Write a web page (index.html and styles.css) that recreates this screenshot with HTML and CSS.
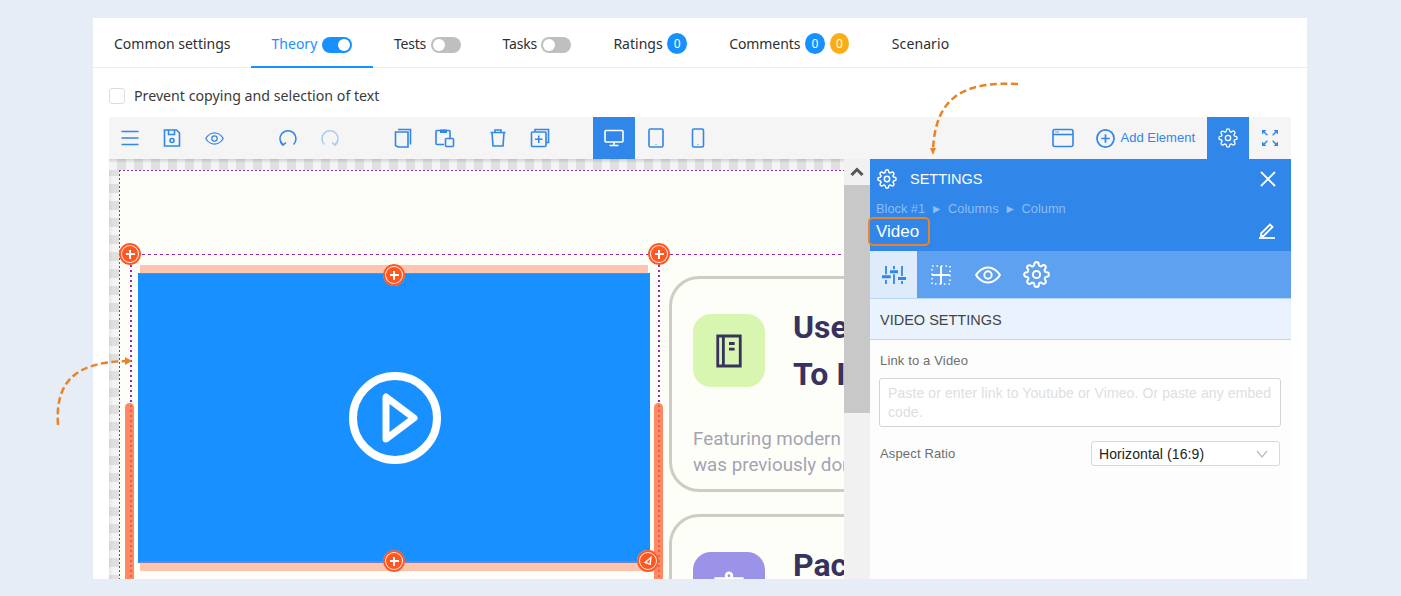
FILE: index.html
```html
<!DOCTYPE html>
<html lang="en">
<head>
  <meta charset="UTF-8">
  <meta name="viewport" content="width=device-width, initial-scale=1.0">
  <title>Lesson editor</title>
  <link rel="stylesheet" href="styles.css">
</head>
<body>
  <svg class="defs" width="0" height="0">
    <symbol id="gear" viewBox="0 0 24 24">
      <circle cx="12" cy="12" r="3.2"/>
      <path d="M19.4 15a1.65 1.65 0 0 0 .33 1.82l.06.06a2 2 0 0 1 0 2.83 2 2 0 0 1-2.83 0l-.06-.06a1.65 1.65 0 0 0-1.82-.33 1.65 1.65 0 0 0-1 1.51V21a2 2 0 0 1-2 2 2 2 0 0 1-2-2v-.09A1.65 1.65 0 0 0 9 19.4a1.65 1.65 0 0 0-1.82.33l-.06.06a2 2 0 0 1-2.83 0 2 2 0 0 1 0-2.83l.06-.06a1.65 1.65 0 0 0 .33-1.82 1.65 1.65 0 0 0-1.51-1H3a2 2 0 0 1-2-2 2 2 0 0 1 2-2h.09A1.65 1.65 0 0 0 4.6 9a1.65 1.65 0 0 0-.33-1.82l-.06-.06a2 2 0 0 1 0-2.83 2 2 0 0 1 2.83 0l.06.06a1.65 1.65 0 0 0 1.82.33H9a1.65 1.65 0 0 0 1-1.51V3a2 2 0 0 1 2-2 2 2 0 0 1 2 2v.09a1.65 1.65 0 0 0 1 1.51 1.65 1.65 0 0 0 1.82-.33l.06-.06a2 2 0 0 1 2.83 0 2 2 0 0 1 0 2.83l-.06.06a1.65 1.65 0 0 0-.33 1.82V9a1.65 1.65 0 0 0 1.51 1H21a2 2 0 0 1 2 2 2 2 0 0 1-2 2h-.09a1.65 1.65 0 0 0-1.51 1z"/>
    </symbol>
    <symbol id="eye" viewBox="0 0 24 24">
      <path d="M1 12s4-7 11-7 11 7 11 7-4 7-11 7-11-7-11-7z"/>
      <circle cx="12" cy="12" r="3.4"/>
    </symbol>
  </svg>

  <div class="app">
    <!-- Tabs -->
    <div class="tabs">
      <div class="tab first">Common settings</div>
      <div class="tab active">Theory <span class="toggle on"></span></div>
      <div class="tab tight">Tests <span class="toggle"></span></div>
      <div class="tab tight">Tasks <span class="toggle"></span></div>
      <div class="tab">Ratings <span class="badge">0</span></div>
      <div class="tab comments">Comments <span class="badge">0</span><span class="badge orange">0</span></div>
      <div class="tab last">Scenario</div>
    </div>

    <label class="copy-row"><span class="checkbox"></span>Prevent copying and selection of text</label>

    <!-- Toolbar -->
    <div class="toolbar">
      <div class="tool"><svg viewBox="0 0 20 20" width="20" height="20"><path d="M1.500 3.500h17M1.500 10h17M1.500 16.500h17"/></svg></div>
      <div class="tool"><svg viewBox="0 0 20 20" width="20" height="20"><path d="M2.500 2h12l3 3v13h-15z"/><path d="M6.500 2v4.500h6V2"/><circle cx="10" cy="12.500" r="2"/></svg></div>
      <div class="tool"><svg width="19" height="19"><use href="#eye"/></svg></div>

      <div class="tool gap-l"><svg viewBox="0 0 20 20" width="20" height="20"><path d="M5 17A8 8 0 1 1 15.500 16.500"/><path d="M2.500 13.500l2.500 3.500 3-2.500"/></svg></div>
      <div class="tool faded"><svg viewBox="0 0 20 20" width="20" height="20"><path d="M15 17A8 8 0 1 0 4.500 16.500"/><path d="M17.500 13.500l-2.500 3.500-3-2.500"/></svg></div>

      <div class="tool gap-m"><svg viewBox="0 0 20 20" width="20" height="20"><path d="M5 1.500h12.500v15"/><path d="M15 4H2.500v13.500l2.500 1.500h10z"/></svg></div>
      <div class="tool"><svg viewBox="0 0 20 20" width="20" height="20"><path d="M9 16.500H2a1 1 0 0 1-1-1V3.500a1 1 0 0 1 1-1h12a1 1 0 0 1 1 1V10"/><path class="filled" d="M5 1.500h7V5H5z"/><rect x="10.500" y="10.500" width="8" height="8" rx="1"/></svg></div>

      <div class="tool gap-s"><svg viewBox="0 0 20 20" width="20" height="20"><path d="M2.500 4.500h15M7 4.500V2h6v2.500M4 4.500l1 13.500h10l1-13.500"/></svg></div>
      <div class="tool"><svg viewBox="0 0 20 20" width="20" height="20"><path d="M5 3.500V1.500h13.500v13H16"/><rect x="1.500" y="4" width="14.500" height="14.500" rx="1"/><path d="M8.700 7.500v7.500M5 11.200h7.500"/></svg></div>

      <div class="tool gap-l current"><svg viewBox="0 0 20 20" width="20" height="20"><rect x="1" y="2.500" width="18" height="11.500" rx="1"/><path d="M10 14v3M5.500 17.500h9"/></svg></div>
      <div class="tool"><svg viewBox="0 0 20 20" width="20" height="20"><rect x="3" y="1" width="14" height="18" rx="1.500"/><path d="M10 16v.6"/></svg></div>
      <div class="tool"><svg viewBox="0 0 20 20" width="20" height="20"><rect x="4.500" y="1" width="11" height="18" rx="1.500"/><path d="M10 16v.6"/></svg></div>

      <div class="tool push"><svg viewBox="0 0 22 20" width="22" height="20"><rect x="1" y="1.500" width="20" height="17" rx="2"/><path d="M1 6.500h20"/><path d="M3.500 4h3" stroke-dasharray="1 1"/></svg></div>
      <div class="add-element">
        <svg viewBox="0 0 20 20" width="19" height="19"><circle cx="10" cy="10" r="9"/><path d="M10 5.500v9M5.500 10h9"/></svg>
        <span>Add Element</span>
      </div>
      <div class="tool current"><svg width="20" height="20" class="gear"><use href="#gear"/></svg></div>
      <div class="tool"><svg viewBox="0 0 18 18" width="16" height="16"><path d="M1.500 1.500l4.500 4.500M16.500 1.500L12 6M1.500 16.500L6 12M16.500 16.500L12 12"/><path class="filled" d="M0 0h5L0 5zM18 0h-5l5 5zM0 18h5l-5-5zM18 18h-5l5-5z"/></svg></div>
    </div>

    <div class="editor">
      <!-- Page canvas -->
      <div class="canvas">
        <div class="page">
          <div class="row">
            <div class="column">
              <div class="spacing-bar over"></div>
              <div class="video">
                <svg viewBox="0 0 92 92" width="92" height="92"><circle cx="46" cy="46" r="42"/><path d="M37 25v42l28-21z"/></svg>
              </div>
              <div class="spacing-bar under"></div>
              <span class="resize-bar left"></span>
              <span class="resize-bar right"></span>
              <span class="handle corner-tl"></span>
              <span class="handle corner-tr"></span>
              <span class="handle top-mid"></span>
              <span class="handle bottom-mid"></span>
              <span class="handle bottom-end">
                <svg viewBox="0 0 14 14" width="14" height="14"><path d="M11 2L3 9l7 2.500z"/></svg>
              </span>
            </div>

            <div class="cards">
              <div class="card">
                <div class="card-head">
                  <div class="tile green">
                    <svg viewBox="0 0 32 36" width="30" height="34"><path d="M4 2h24v32H4z"/><path d="M10 2v32M16 10h6M16 16h6"/></svg>
                  </div>
                  <h2>Use Modern Tools<br>To Improve Lessons</h2>
                </div>
                <p>Featuring modern design and layouts<br>was previously done by hand in code</p>
              </div>
              <div class="card">
                <div class="card-head">
                  <div class="tile purple">
                    <svg viewBox="0 0 36 36" width="34" height="34"><path d="M4 7h28v22H4z"/><circle cx="18" cy="4" r="3"/></svg>
                  </div>
                  <h2>Packed With Blocks</h2>
                </div>
              </div>
            </div>
          </div>
        </div>
      </div>

      <div class="scrollbar">
        <div class="scroll-up"><svg viewBox="0 0 14 10" width="14" height="10"><path d="M1.500 8L7 2.500 12.500 8"/></svg></div>
        <div class="scroll-thumb"></div>
      </div>

      <!-- Settings panel -->
      <div class="panel">
        <div class="panel-head">
          <div class="panel-title">
            <svg width="20" height="20"><use href="#gear"/></svg>
            <span>SETTINGS</span>
            <svg class="close" viewBox="0 0 16 16" width="16" height="16"><path d="M1 1l14 14M15 1L1 15"/></svg>
          </div>
          <div class="crumbs">Block #1 <i>►</i> Columns <i>►</i> Column</div>
          <div class="name-row">
            <span class="name">Video</span>
            <svg viewBox="0 0 18 18" width="18" height="18"><path d="M3 12.500L12 3.500l2.500 2.500-9 9H3z"/><path d="M1 17h16"/></svg>
          </div>
        </div>

        <div class="panel-tabs">
          <div class="panel-tab active"><svg viewBox="0 0 24 24" width="24" height="24"><path d="M4 3v8.300M4 17v4M12 3v3.300M12 11.300V21M20 3v10M20 18v3"/><path class="thick" d="M0 13.700h8.700M8 8.700h8M16 15.500h8"/></svg></div>
          <div class="panel-tab"><svg viewBox="0 0 20 20" width="20" height="20"><path d="M10 1v18M1 10h18"/><path class="dots" d="M1 1h18v18H1z"/></svg></div>
          <div class="panel-tab"><svg width="26" height="26"><use href="#eye"/></svg></div>
          <div class="panel-tab last"><svg width="27" height="27"><use href="#gear"/></svg></div>
        </div>

        <div class="section-title">VIDEO SETTINGS</div>

        <div class="panel-body">
          <div class="field-label">Link to a Video</div>
          <div class="textarea">Paste or enter link to Youtube or Vimeo. Or paste any embed code.</div>
          <div class="ratio-row">
            <span class="field-label">Aspect Ratio</span>
            <div class="select">
              Horizontal (16:9)
              <svg viewBox="0 0 12 8" width="12" height="8"><path d="M1 1l5 6 5-6"/></svg>
            </div>
          </div>
        </div>
      </div>
    </div>
  </div>

  <!-- Callout arrows -->
  <svg class="arrow arrow-top" viewBox="0 0 90 76" width="90" height="76"><path d="M87 3C40 1 4 10 2 70"/><path class="tip" d="M-1 67h6l-3 7z"/></svg>
  <svg class="arrow arrow-left" viewBox="0 0 80 70" width="80" height="70"><path d="M3 68C0 25 20 5 72 4"/><path class="tip" d="M70 0l7 4-7 4z"/></svg>
</body>
</html>
```

FILE: styles.css
```css
* {
  box-sizing: border-box;
}

html, body {
  height: 100%;
}

body {
  margin: 0;
  overflow: hidden;
  position: relative;
  padding: 18px 94px 17px 93px;
  background-color: #e7edf6;
  font-family: "Noto Sans", Arial, sans-serif;
  color: #333;
}

.defs {
  position: absolute;
}

svg {
  display: block;
  fill: none;
  stroke: currentColor;
  stroke-width: 1.8;
  overflow: visible;
}

svg .filled {
  fill: currentColor;
  stroke: none;
}

.app {
  height: 100%;
  padding: 0 16px;
  background: white;
  overflow: hidden;
  display: flex;
  flex-direction: column;
}

/* Tabs */
.tabs {
  display: flex;
  height: 50px;
  margin: 0 -16px;
  border-bottom: 1px solid #eee;
  font-size: 14px;
}

.tab {
  display: flex;
  align-items: center;
  padding: 2px 21px 0;
  white-space: pre;
  color: #2f2f2f;
}

.tab.first {
  margin-right: -1px;
}

.tab.tight {
  letter-spacing: -0.2px;
}

.tab.comments {
  letter-spacing: -0.1px;
}

.tab.last {
  padding-left: 22px;
  letter-spacing: 0.1px;
}

.tab.active {
  color: #1890ff;
  border-bottom: 2px solid #1890ff;
  height: 50px;
  padding-top: 3px;
}

.toggle {
  position: relative;
  width: 30px;
  height: 16px;
  margin: 2px 0 0 1px;
  border-radius: 8px;
  background: #bfbfbf;
}

.toggle::after {
  content: "";
  position: absolute;
  top: 2px;
  left: 2px;
  width: 12px;
  height: 12px;
  border-radius: 50%;
  background: white;
}

.toggle.on {
  background: #1890ff;
}

.toggle.on::after {
  left: 16px;
}

.badge {
  width: 20px;
  height: 21px;
  margin-left: 1px;
  border-radius: 50%;
  background: #1890ff;
  color: white;
  font-size: 12px;
  line-height: 22px;
  text-align: center;
}

.badge.orange {
  width: 19px;
  margin-left: 5px;
  background: #faad14;
}

.copy-row {
  display: flex;
  align-items: center;
  gap: 9px;
  height: 49px;
  padding-top: 6px;
  font-size: 14.2px;
  color: #3a3a3a;
}

.checkbox {
  width: 16px;
  height: 16px;
  border: 1px solid #ddd;
  border-radius: 3px;
}

/* Toolbar */
.toolbar {
  display: flex;
  flex: none;
  height: 42px;
  background: #f5f5f5;
  color: #3086e9;
}

.tool {
  display: flex;
  align-items: center;
  justify-content: center;
  width: 42px;
}

.tool svg {
  stroke-width: 1.6;
}

.tool.faded {
  color: #a9cdf5;
}

.tool.current {
  background: #3086e9;
  color: white;
}

.gap-l {
  margin-left: 32px;
}

.gap-m {
  margin-left: 31px;
}

.gap-s {
  margin-left: 11px;
}

.push {
  margin-left: auto;
}

.add-element {
  display: flex;
  align-items: center;
  gap: 6px;
  padding: 0 12px 0 12px;
  font-family: "Liberation Sans", Arial, sans-serif;
  font-size: 13px;
}

.add-element span {
  margin-top: -2px;
}

/* Editor */
.editor {
  display: flex;
  flex: 1;
  min-height: 0;
}

.canvas {
  width: 735px;
  padding: 11px 0 0 10px;
  overflow: hidden;
  background-color: #eee;
  background-image:
    linear-gradient(rgba(0, 0, 0, 0.14), rgba(0, 0, 0, 0) 4px),
    repeating-linear-gradient(90deg, #f4f4f4 0 8px, #e0e0e0 8px 17px),
    linear-gradient(90deg, rgba(0, 0, 0, 0.06), rgba(0, 0, 0, 0) 4px),
    repeating-linear-gradient(#f4f4f4 0 8px, #e0e0e0 8px 17px);
  background-size: 100% 11px, 100% 11px, 10px 100%, 10px 100%;
  background-repeat: no-repeat;
}

.page {
  height: 100%;
  padding: 84px 0 0 11px;
  background:
    repeating-linear-gradient(90deg, #9c27b0 0 2px, transparent 2px 4px) top / 100% 1px no-repeat,
    repeating-linear-gradient(#9c27b0 0 2px, transparent 2px 4px) left / 1px 100% no-repeat,
    #fefef8;
}

.row {
  display: flex;
  padding-top: 1px;
  background: repeating-linear-gradient(90deg, #9c27b0 0 3px, transparent 3px 6px) top / 100% 1px no-repeat;
  font-family: Roboto, Arial, sans-serif;
}

.column {
  position: relative;
  flex: none;
  width: 530px;
  padding: 10px 10px 0 8px;
  background:
    repeating-linear-gradient(#9c27b0 0 2px, transparent 2px 5px) left / 2px 100% no-repeat,
    repeating-linear-gradient(#9c27b0 0 2px, transparent 2px 5px) right / 2px 100% no-repeat;
}

.spacing-bar {
  position: relative;
  margin: 0 2px;
  background: #ffc4ad;
}

.spacing-bar.over {
  height: 9px;
  margin-bottom: -1px;
  border-bottom: 1px solid #6f86c0;
}

.spacing-bar.under {
  height: 10px;
  margin-top: -2px;
  border-top: 2px solid #6f86c0;
}

.video {
  display: flex;
  align-items: center;
  justify-content: center;
  height: 290px;
  padding-left: 2px;
  background: #1890ff;
  color: white;
}

.video svg {
  stroke-width: 8;
  stroke-linejoin: round;
}

.video svg path {
  stroke-width: 7;
}

.resize-bar {
  position: absolute;
  top: 148px;
  width: 9px;
  height: 300px;
  border-radius: 5px 5px 0 0;
  background: rgba(255, 107, 60, 0.8);
}

.resize-bar.left {
  left: -5px;
}

.resize-bar.right {
  right: -3px;
}

.handle {
  position: absolute;
  display: flex;
  align-items: center;
  justify-content: center;
  width: 22px;
  height: 22px;
  border-radius: 50%;
  color: white;
  background:
    linear-gradient(white, white) center / 9px 2px no-repeat,
    linear-gradient(white, white) center / 2px 9px no-repeat,
    #ff5722;
  box-shadow: inset 0 0 0 2px #ff5722, inset 0 0 0 3px rgba(255, 255, 255, 0.9);
}

.corner-tl {
  top: -12px;
  left: -11px;
}

.corner-tr {
  top: -12px;
  right: -10px;
}

.top-mid {
  top: 9px;
  left: 253px;
}

.bottom-mid {
  top: 295px;
  left: 253px;
}

.bottom-end {
  top: 295px;
  left: 507px;
  background: #ff5722;
}

.bottom-end svg {
  width: 10px;
  height: 10px;
  stroke-width: 2;
}

.cards {
  flex: none;
  width: 600px;
  margin-left: 9px;
  padding-top: 21px;
}

.card {
  height: 216px;
  margin-bottom: 22px;
  padding: 35px 21px 0;
  border: 3px solid #cdcdc6;
  border-radius: 30px;
  white-space: nowrap;
}

.card-head {
  display: flex;
  gap: 28px;
}

.card h2 {
  margin: 0;
  font-size: 32px;
  font-weight: 700;
  line-height: 47px;
  color: #38325f;
  position: relative;
  top: -10px;
}

.card p {
  margin: 18px 0 0;
  font-size: 18.8px;
  line-height: 26px;
  color: #a4a3b4;
}

.tile {
  display: flex;
  align-items: center;
  justify-content: center;
  flex: none;
  width: 72px;
  height: 73px;
  border-radius: 18px;
  color: #38325f;
}

.tile.green {
  background: #d8f6b0;
}

.tile.purple {
  background: #9b93e8;
  color: white;
}

.tile svg {
  stroke-width: 3;
}

/* Scrollbar */
.scrollbar {
  flex: none;
  width: 26px;
  background: #f1f1f1;
}

.scroll-up {
  display: flex;
  align-items: center;
  justify-content: center;
  height: 26px;
  color: #555;
}

.scroll-up svg {
  stroke-width: 3;
}

.scroll-thumb {
  height: 228px;
  background: #c8c8c8;
}

/* Settings panel */
.panel {
  flex: 1;
  display: flex;
  flex-direction: column;
  min-width: 0;
  background: #fdfdfd;
  font-family: "Liberation Sans", Arial, sans-serif;
}

.panel-head {
  height: 92px;
  background: #3086e9;
  color: white;
}

.panel-title {
  display: flex;
  align-items: center;
  gap: 13px;
  height: 40px;
  padding: 0 15px 0 7px;
  font-size: 14.5px;
}

.panel-title .close {
  margin-left: auto;
}

.crumbs {
  margin-top: 2px;
  padding-left: 6px;
  font-size: 12.8px;
  line-height: 15px;
  color: #8cbdf5;
}

.crumbs i {
  font-style: normal;
  font-size: 12px;
  margin: 0 2px;
}

.name-row {
  display: flex;
  align-items: center;
  justify-content: space-between;
  padding-right: 15px;
}

.name-row svg {
  margin-bottom: 3px;
}

.name {
  width: 62px;
  height: 29px;
  margin-left: -2px;
  padding-left: 6px;
  border: 2px solid #e8832a;
  border-radius: 5px;
  font-size: 17px;
  line-height: 26px;
}

.panel-tabs {
  display: flex;
  height: 47px;
  background: #5ea1f0;
  color: white;
}

.panel-tab {
  display: flex;
  align-items: center;
  justify-content: center;
  width: 47px;
}

.panel-tab.last {
  width: 50px;
}

.panel-tab.active {
  background: #ddebfb;
  color: #3086e9;
}

.panel-tab .thick {
  stroke-width: 3;
}

.panel-tab .dots {
  stroke-width: 1.6;
  stroke-dasharray: 1.6 2.900;
}

.section-title {
  height: 42px;
  padding: 1px 0 0 10px;
  border-top: 1px solid #b9d6f6;
  border-bottom: 1px solid #b9d6f6;
  background: #eaf3fd;
  font-size: 14.5px;
  line-height: 40px;
  color: #444;
}

.panel-body {
  padding: 13px 10px 0 9px;
}

.field-label {
  padding-left: 1px;
  font-size: 13px;
  letter-spacing: 0.15px;
  line-height: 16px;
  color: #6e6e6e;
}

.textarea {
  height: 49px;
  margin-top: 9px;
  padding: 5px 8px;
  border: 1px solid #d4d4d4;
  border-radius: 3px;
  background: white;
  font-size: 14px;
  letter-spacing: 0.1px;
  line-height: 19px;
  color: #dedede;
}

.ratio-row {
  display: flex;
  align-items: center;
  justify-content: space-between;
  margin-top: 14px;
  padding-right: 1px;
}

.select {
  display: flex;
  align-items: center;
  justify-content: space-between;
  width: 189px;
  height: 25px;
  padding: 0 11px 0 7px;
  border: 1px solid #d9d9d9;
  border-radius: 3px;
  background: white;
  font-size: 14px;
  letter-spacing: 0.1px;
  color: #222;
}

.select svg {
  color: #bbb;
  stroke-width: 1.200;
}

/* Callout arrows */
.arrow {
  position: absolute;
  color: #e8832a;
  stroke-width: 2.5;
  stroke-dasharray: 7 3.500;
}

.arrow .tip {
  fill: #e8832a;
  stroke: none;
}

.arrow-top {
  left: 931px;
  top: 81px;
}

.arrow-left {
  left: 55px;
  top: 357px;
}
```
